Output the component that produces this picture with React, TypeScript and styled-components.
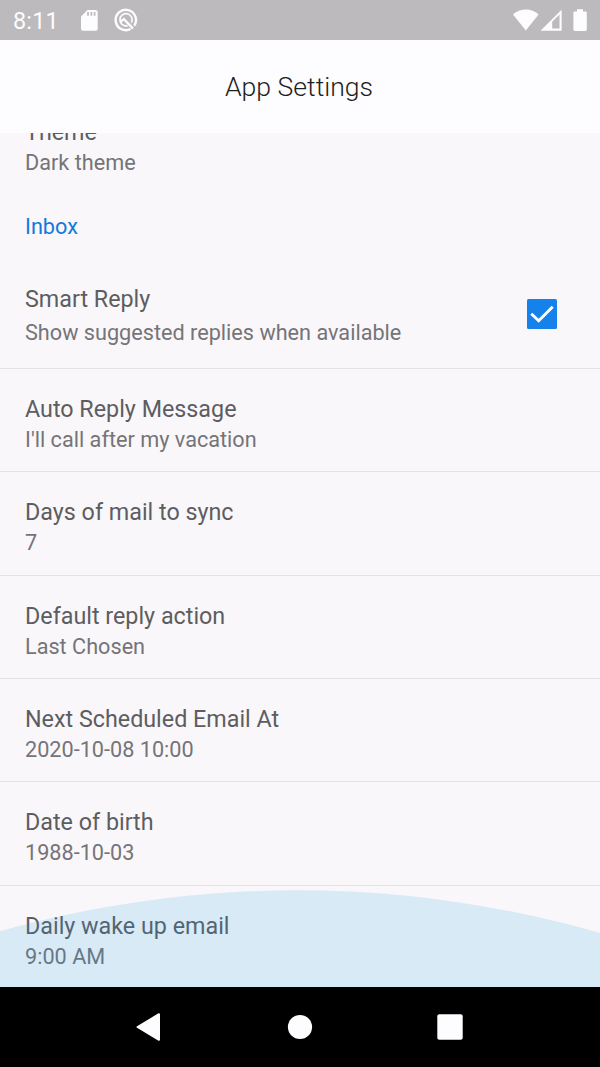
import React from 'react';
import styled, { createGlobalStyle } from 'styled-components';

const GlobalStyle = createGlobalStyle`
  * { box-sizing: border-box; }
  body { margin: 0; font-family: Roboto, "Liberation Sans", sans-serif; background: #f9f7fa; }
`;

const Screen = styled.div`
  width: 600px;
  height: 1067px;
  display: flex;
  flex-direction: column;
  overflow: hidden;
  background: #f9f7fa;
`;

const StatusBar = styled.div`
  flex: none;
  height: 40px;
  padding: 0 12px 0 13px;
  display: flex;
  align-items: center;
  justify-content: space-between;
  background: #bcbabc;
  color: #fdfcfe;
`;

const StatusGroup = styled.div`
  display: flex;
  align-items: center;
`;

const Clock = styled.span`
  width: 67px;
  font-size: 23.4px;
  line-height: 30px;
  letter-spacing: 0.2px;
  padding-top: 2px;
`;

const Header = styled.header`
  flex: none;
  height: 93px;
  display: flex;
  align-items: center;
  justify-content: center;
  background: #fdfcfe;
`;

const HeaderTitle = styled.h1`
  margin: 0 2px 0 0;
  font-size: 26.6px;
  font-weight: 300;
  line-height: 36px;
  color: #1f1f21;
`;

const Content = styled.main`
  position: relative;
  flex: none;
  height: 854px;
  overflow: hidden;
`;

const Wave = styled.svg`
  position: absolute;
  left: 0;
  bottom: 0;
  pointer-events: none;
`;

const Row = styled.div<{ $height: number; $top: number; $line?: boolean }>`
  height: ${(p) => p.$height}px;
  padding: ${(p) => p.$top}px 43px 0 25px;
  border-bottom: ${(p) => (p.$line === false ? 'none' : '1px solid #e5e3e6')};
  display: flex;
  justify-content: space-between;
  align-items: flex-start;
`;

const TopRow = styled(Row)`
  margin-top: -16px;
`;

const Labels = styled.div<{ $gap: number }>`
  display: flex;
  flex-direction: column;
  gap: ${(p) => p.$gap}px;
  white-space: nowrap;
`;

const Title = styled.div`
  font-size: 23.3px;
  line-height: 30px;
  color: #5d5d61;
`;

const Summary = styled.div`
  font-size: 21.67px;
  line-height: 30px;
  color: #757478;
`;

const Section = styled.h2`
  margin: 0;
  height: 47px;
  padding-left: 25px;
  font-size: 21.67px;
  font-weight: 400;
  line-height: 30px;
  color: #107bdc;
`;

const Checkbox = styled.div`
  width: 30px;
  height: 30px;
  margin: 14.6px 0.4px 0 0;
  border-radius: 1.5px;
  background: #1482ea;
  display: flex;
`;

const NavBar = styled.nav`
  flex: none;
  height: 80px;
  background: #000;
  display: flex;
  align-items: center;
  justify-content: center;
  gap: 110px;
`;

const items = [
  { title: 'Auto Reply Message', summary: "I'll call after my vacation" },
  { title: 'Days of mail to sync', summary: '7' },
  { title: 'Default reply action', summary: 'Last Chosen' },
  { title: 'Next Scheduled Email At', summary: '2020-10-08 10:00' },
  { title: 'Date of birth', summary: '1988-10-03' },
  { title: 'Daily wake up email', summary: '9:00 AM' },
];

export default function App() {
  return (
    <Screen>
      <GlobalStyle />
      <StatusBar>
        <StatusGroup>
          <Clock>8:11</Clock>
          <svg width="60" height="40" viewBox="80 0 60 40">
            <path d="M87.5 10H95.5Q97.7 10 97.7 12V28.8Q97.7 30.8 95.7 30.8H83Q81 30.8 81 28.8V16.5Z" fill="#fdfcfe" />
            <path d="M88 12V15.8M91.4 12V15.8M94.6 12V15.8" stroke="#bcbabc" strokeWidth="1.7" />
            <path d="M130.6 29A10.2 10.2 0 1 1 134.2 25.8" fill="none" stroke="#fdfcfe" strokeWidth="2.4" />
            <path d="M127.6 25.6A6.1 6.1 0 1 1 131.4 22.6" fill="none" stroke="#fdfcfe" strokeWidth="1.7" />
            <path d="M120.4 21.8L123.8 19L133 28.6" fill="none" stroke="#fdfcfe" strokeWidth="2.3" />
          </svg>
        </StatusGroup>
        <svg width="75" height="40" viewBox="513 0 75 40" fill="#fdfcfe">
          <path d="M513 14.6Q518.5 9.6 525.8 9.6T538.6 14.6L525.8 30.4Z" />
          <path d="M561.6 9.8V30.8H540.5Z" />
          <path fill="#bcbabc" d="M552.2 21.8L559.5 14.6V28.4H552.2Z" />
          <path d="M577 9.3H583V11.4H585.4Q586.8 11.4 586.8 12.8V29.5Q586.8 30.9 585.4 30.9H574.8Q573.4 30.9 573.4 29.5V12.8Q573.4 11.4 574.8 11.4H577Z" />
        </svg>
      </StatusBar>
      <Header>
        <HeaderTitle>App Settings</HeaderTitle>
      </Header>
      <Content>
        <TopRow $height={94.8} $top={0} $line={false}>
          <Labels $gap={0.6}>
            <Title>Theme</Title>
            <Summary>Dark theme</Summary>
          </Labels>
        </TopRow>
        <Section>Inbox</Section>
        <Row $height={110.2} $top={25.5}>
          <Labels $gap={4}>
            <Title>Smart Reply</Title>
            <Summary>Show suggested replies when available</Summary>
          </Labels>
          <Checkbox>
            <svg width="30" height="30" viewBox="0 0 30 30">
              <path d="M4.3 14.7L11.7 21.7L25.7 7.7" fill="none" stroke="#fff" strokeWidth="2.9" />
            </svg>
          </Checkbox>
        </Row>
        {items.map((item) => (
          <Row key={item.title} $height={103.36} $top={25}>
            <Labels $gap={0.9}>
              <Title>{item.title}</Title>
              <Summary>{item.summary}</Summary>
            </Labels>
          </Row>
        ))}
        <Wave width="600" height="97" viewBox="0 890 600 97">
          <circle cx="297" cy="1985.3" r="1095" fill="rgb(20,154,229)" fillOpacity="0.14" />
        </Wave>
      </Content>
      <NavBar>
        <svg width="40" height="40" viewBox="130 1007 40 40">
          <path d="M137.5 1027L159 1014.2V1039.8Z" fill="#fdfcfe" stroke="#fdfcfe" strokeWidth="2" strokeLinejoin="round" />
        </svg>
        <svg width="40" height="40" viewBox="280 1007 40 40">
          <circle cx="300" cy="1027" r="12.1" fill="#fdfcfe" />
        </svg>
        <svg width="40" height="40" viewBox="430 1007 40 40">
          <rect x="437.3" y="1014.3" width="25.4" height="25.4" rx="2" fill="#fdfcfe" />
        </svg>
      </NavBar>
    </Screen>
  );
}
